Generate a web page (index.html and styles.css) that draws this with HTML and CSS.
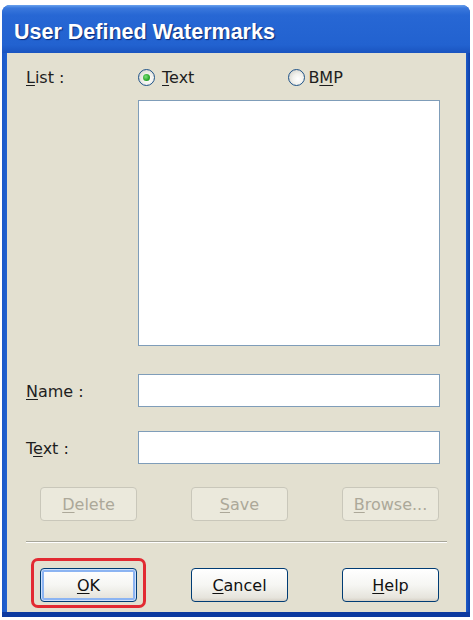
FILE: index.html
```html
<!DOCTYPE html>
<html>
<head>
<meta charset="utf-8">
<link rel="stylesheet" href="styles.css">
</head>
<body>
<div class="window">
  <div class="titlebar"><span class="title">User Defined Watermarks</span></div>
  <div class="content">
    <div class="row row-list">
      <span class="label"><u>L</u>ist :</span>
      <div class="radios">
        <label class="radio radio-text"><span class="circle checked"></span><span><u>T</u>ext</span></label>
        <label class="radio radio-bmp"><span class="circle"></span><span>B<u>M</u>P</span></label>
      </div>
    </div>
    <div class="row row-box">
      <span class="label"></span>
      <div class="listbox"></div>
    </div>
    <div class="row row-name">
      <span class="label"><u>N</u>ame :</span>
      <div class="input"></div>
    </div>
    <div class="row row-textfield">
      <span class="label">T<u>e</u>xt :</span>
      <div class="input"></div>
    </div>
    <div class="buttons buttons-edit">
      <div class="btn disabled"><span><u>D</u>elete</span></div>
      <div class="btn disabled"><span><u>S</u>ave</span></div>
      <div class="btn disabled"><span><u>B</u>rowse...</span></div>
    </div>
    <div class="separator"></div>
    <div class="buttons buttons-main">
      <div class="btn default"><span><u>O</u>K</span><div class="highlight"></div></div>
      <div class="btn"><span><u>C</u>ancel</span></div>
      <div class="btn"><span><u>H</u>elp</span></div>
    </div>
  </div>
</div>
</body>
</html>
```

FILE: styles.css
```css
html, body {
  margin: 0;
  padding: 0;
  background: #ffffff;
}
body {
  width: 473px;
  height: 620px;
  overflow: hidden;
  font-family: "DejaVu Sans", "Liberation Sans", sans-serif;
  font-size: 16px;
  color: #1e1e1e;
}
u { text-decoration: underline; text-underline-offset: 2px; }

.window {
  margin: 5px 0 0 2px;
  width: 468px;
  height: 612px;
  border-radius: 8px 8px 0 0;
  display: flex;
  flex-direction: column;
  box-sizing: border-box;
  padding: 0 4px 5px 5px;
  background: linear-gradient(to right, #1a58c8 0, #2262d0 5px, #2262d0 calc(100% - 5px), #0d3fa8 100%);
  box-shadow: inset 0 -5px 0 #0d3aa0;
}
.titlebar {
  height: 48px;
  margin: 0 -4px 0 -5px;
  border-radius: 8px 8px 0 0;
  background: linear-gradient(to bottom, #6aa2ee 0, #3a78dc 3px, #2767d4 10px, #2262d0 40px, #1a54c0 48px);
  display: flex;
  align-items: center;
  padding-left: 12px;
  box-sizing: border-box;
}
.title {
  font-family: "Liberation Sans", Arial, sans-serif;
  font-weight: bold;
  font-size: 21.5px;
  color: #ffffff;
  text-shadow: 1px 1px 1px #0a2a78;
  margin-top: 6px;
}
.content {
  flex: 1;
  background: #e3e0d0;
  padding: 15px 0 0 19px;
  box-sizing: border-box;
  display: flex;
  flex-direction: column;
}
.row {
  display: flex;
  align-items: center;
}
.label {
  width: 112px;
  flex: none;
}
.row-list { height: 18px; }
.radios {
  display: flex;
  align-items: center;
}
.radio {
  display: flex;
  align-items: center;
  gap: 7px;
}
.radio-bmp { margin-left: 94px; gap: 3px; }
.circle {
  width: 15px;
  height: 15px;
  border-radius: 50%;
  border: 1px solid #1d5288;
  background: radial-gradient(circle at 60% 60%, #ffffff 0, #f2f2ee 40%, #c9c8c0 100%);
  position: relative;
  flex: none;
}
.circle.checked::after {
  content: "";
  position: absolute;
  left: 4px;
  top: 4px;
  width: 7px;
  height: 7px;
  border-radius: 50%;
  background: radial-gradient(circle at 40% 40%, #7de07d 0, #29a829 60%, #1a861a 100%);
}
.listbox, .input {
  width: 302px;
  box-sizing: border-box;
  border: 1px solid #7f9db9;
  background: #ffffff;
}
.row-box { margin-top: 14px; }
.listbox { height: 246px; }
.row-name { margin-top: 28px; }
.row-textfield { margin-top: 24px; }
.input { height: 33px; }
.row-name .label, .row-textfield .label { margin-top: 2px; }

.buttons {
  display: flex;
  gap: 54px;
  padding-left: 14px;
}
.buttons-edit { margin-top: 23px; }
.btn {
  width: 97px;
  height: 34px;
  box-sizing: border-box;
  border: 1px solid #003c74;
  border-radius: 4px;
  background: linear-gradient(to bottom, #ffffff 0, #f6f6f3 50%, #e6e4dc 90%, #d6d0c5 100%);
  display: flex;
  align-items: center;
  justify-content: center;
  position: relative;
  color: #111;
}
.btn.disabled {
  border-color: #c9c7ba;
  background: #ebe9dc;
  color: #aca899;
}
.btn.default {
  box-shadow: inset 0 0 0 1px #cfe0fb, inset 0 0 0 3px #8cb4f2;
}
.highlight {
  position: absolute;
  left: -10px;
  top: -11px;
  right: -10px;
  bottom: -7px;
  border: 3px solid #e22a32;
  border-radius: 7px;
}
.separator {
  margin-top: 20px;
  width: 421px;
  height: 1px;
  background: #a7a69a;
  border-bottom: 1px solid #ffffff;
}
.buttons-main { margin-top: 25px; }
```
